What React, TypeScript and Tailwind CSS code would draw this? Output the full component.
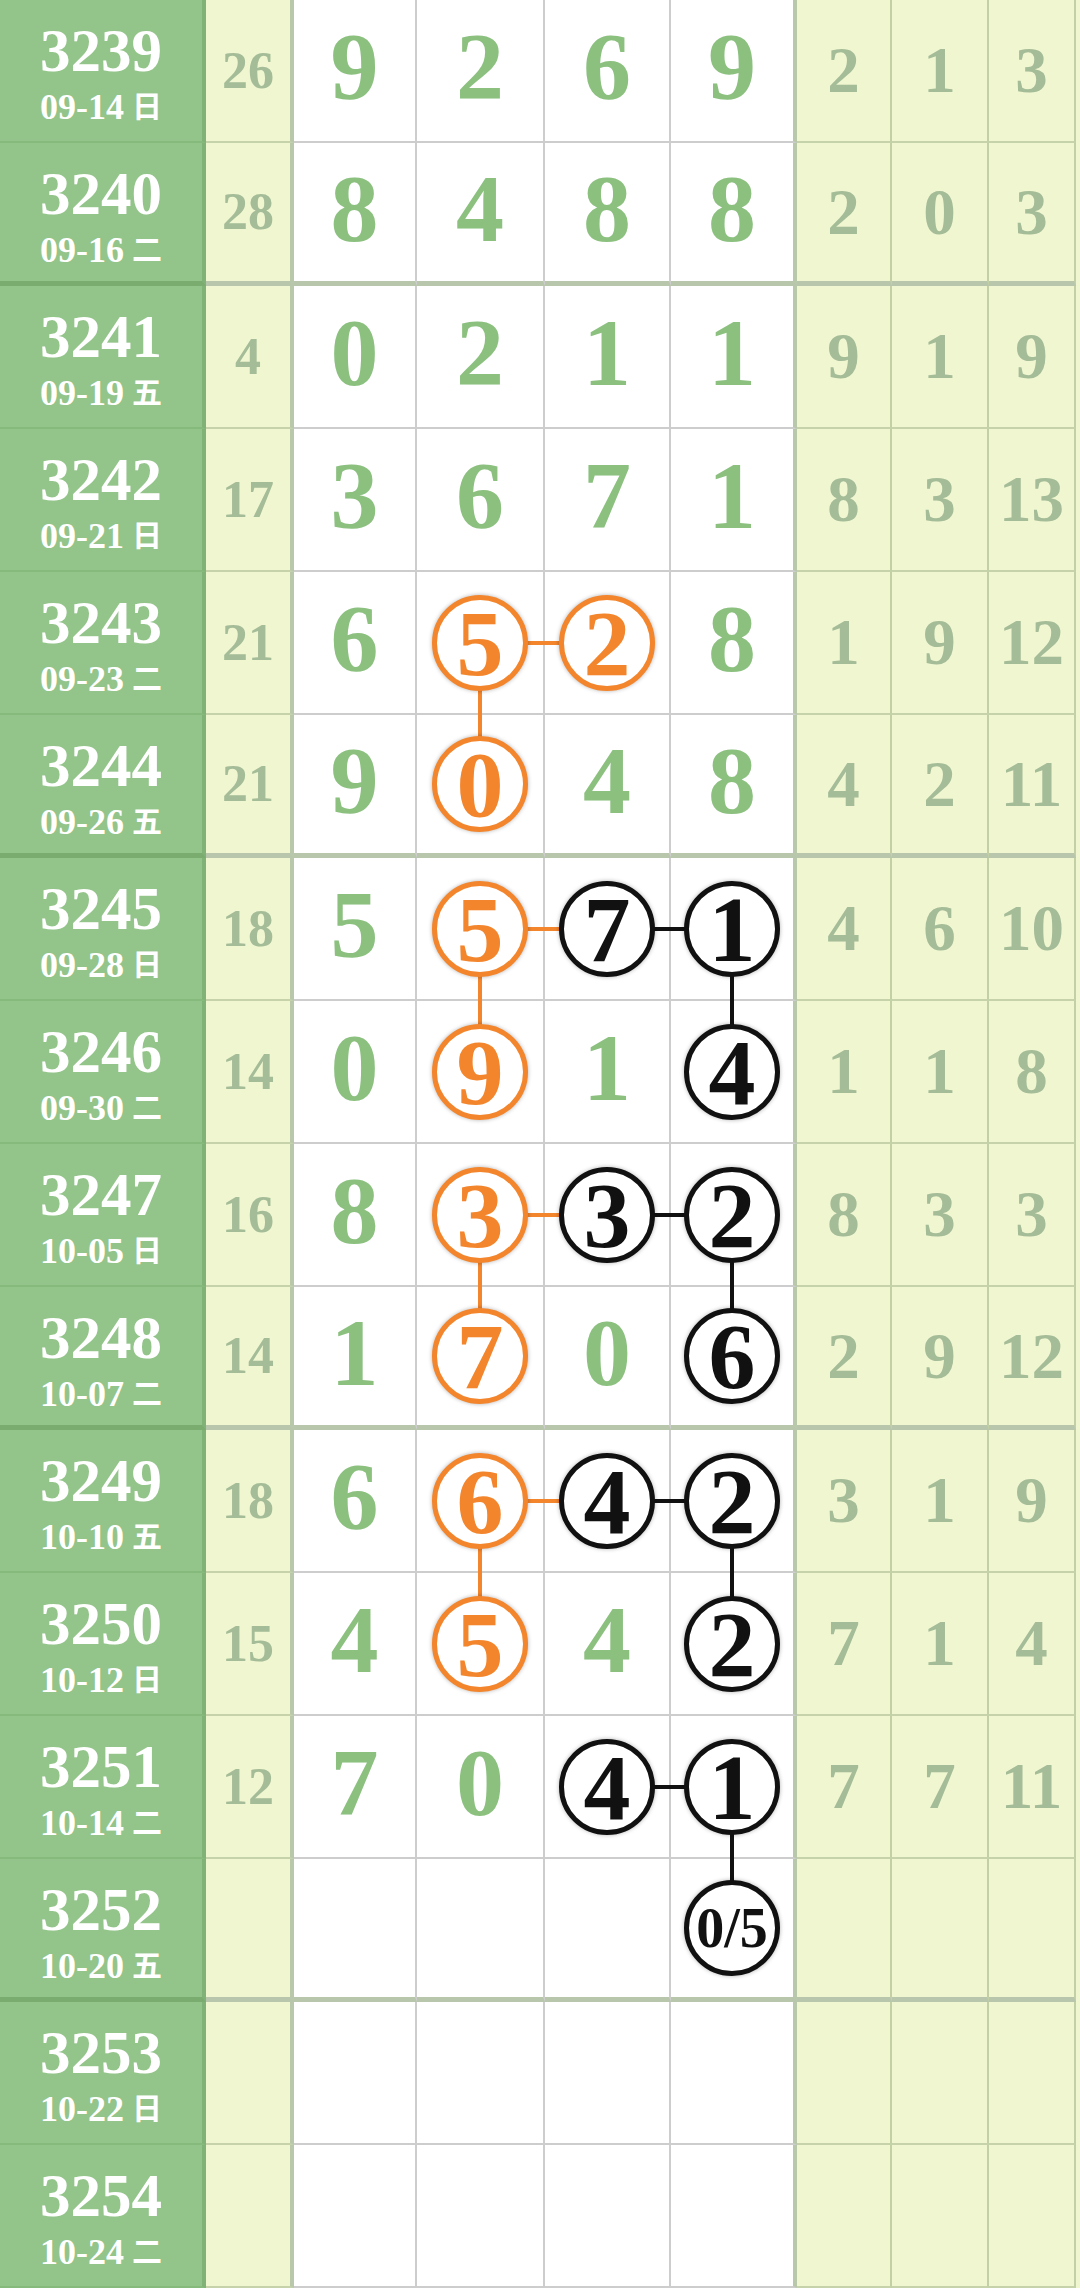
type Row = {
  n: string;
  d: string;
  w: string;
  s?: string;
  v?: string[];
  r?: string[];
  m?: string;
  lr?: number[];
  ld?: number[];
};

const rows: Row[] = [
  { n: "3239", d: "09-14", w: "日", s: "26", v: ["9", "2", "6", "9"], r: ["2", "1", "3"] },
  { n: "3240", d: "09-16", w: "二", s: "28", v: ["8", "4", "8", "8"], r: ["2", "0", "3"] },
  { n: "3241", d: "09-19", w: "五", s: "4", v: ["0", "2", "1", "1"], r: ["9", "1", "9"] },
  { n: "3242", d: "09-21", w: "日", s: "17", v: ["3", "6", "7", "1"], r: ["8", "3", "13"] },
  { n: "3243", d: "09-23", w: "二", s: "21", v: ["6", "5", "2", "8"], r: ["1", "9", "12"], m: ".oo.", lr: [1], ld: [1] },
  { n: "3244", d: "09-26", w: "五", s: "21", v: ["9", "0", "4", "8"], r: ["4", "2", "11"], m: ".o.." },
  { n: "3245", d: "09-28", w: "日", s: "18", v: ["5", "5", "7", "1"], r: ["4", "6", "10"], m: ".obb", lr: [1, 2], ld: [1, 3] },
  { n: "3246", d: "09-30", w: "二", s: "14", v: ["0", "9", "1", "4"], r: ["1", "1", "8"], m: ".o.b" },
  { n: "3247", d: "10-05", w: "日", s: "16", v: ["8", "3", "3", "2"], r: ["8", "3", "3"], m: ".obb", lr: [1, 2], ld: [1, 3] },
  { n: "3248", d: "10-07", w: "二", s: "14", v: ["1", "7", "0", "6"], r: ["2", "9", "12"], m: ".o.b" },
  { n: "3249", d: "10-10", w: "五", s: "18", v: ["6", "6", "4", "2"], r: ["3", "1", "9"], m: ".obb", lr: [1, 2], ld: [1, 3] },
  { n: "3250", d: "10-12", w: "日", s: "15", v: ["4", "5", "4", "2"], r: ["7", "1", "4"], m: ".o.b" },
  { n: "3251", d: "10-14", w: "二", s: "12", v: ["7", "0", "4", "1"], r: ["7", "7", "11"], m: "..bb", lr: [2], ld: [3] },
  { n: "3252", d: "10-20", w: "五", v: ["", "", "", "0/5"], m: "...b" },
  { n: "3253", d: "10-22", w: "日" },
  { n: "3254", d: "10-24", w: "二" },
];

const mainW = ["w-[123px]", "w-[128px]", "w-[126px]", "w-[126px]"];
const sideW = ["w-[95px]", "w-[97px]", "w-[87px]"];

const lineColor = (mark?: string) => (mark === "o" ? "bg-[#f3852c]" : "bg-[#111111]");

const Ball = ({ text, mark }: { text: string; mark: string }) => {
  const orange = mark === "o";
  return (
    <div
      className={`relative z-10 w-[96px] h-[96px] rounded-full bg-white border-[5px] flex items-center justify-center leading-none shadow-[0_0_4px_rgba(0,0,0,0.3)] ${
        orange ? "border-[#f3852c] text-[#f3852c]" : "border-[#111111] text-[#111111]"
      } ${text.length > 1 ? "text-[56px]" : "text-[94px]"}`}
    >
      {text}
    </div>
  );
};

const App = () => {
  return (
    <div className="w-[1080px] font-['Liberation_Serif','Noto_Sans_CJK_SC',serif] font-bold">
      {rows.map((row, ri) => {
        const thick = ri % 4 === 1;
        const prev = ri > 0 ? rows[ri - 1] : undefined;
        return (
          <div key={row.n} className="flex h-[143px] bg-[#f0f7d0]">
            <div
              className={`w-[206px] shrink-0 h-full bg-[#93c48a] border-r-[4px] border-r-[#80b176] flex flex-col items-center pt-[20px] text-white ${
                thick ? "border-b-[5px] border-b-[#7aac70]" : "border-b-2 border-b-[#86b97c]"
              }`}
            >
              <div className="text-[61px] leading-none">{row.n}</div>
              <div className="text-[36px] leading-none mt-[8px] flex items-center gap-[8px]">
                <span>{row.d}</span>
                <span className="text-[30px]">{row.w}</span>
              </div>
            </div>
            <div
              className={`w-[88px] shrink-0 h-full border-r-[4px] border-r-[#b9c8ab] flex items-center justify-center text-[52px] leading-none text-[#a5bc98] ${
                thick ? "border-b-[5px] border-b-[#b8c6ab]" : "border-b-2 border-b-[#c5d2aa]"
              }`}
            >
              {row.s}
            </div>
            {mainW.map((w, ci) => {
              const mark = row.m?.[ci];
              const isBall = mark === "o" || mark === "b";
              const right = row.lr?.includes(ci);
              const left = row.lr?.includes(ci - 1);
              const down = row.ld?.includes(ci);
              const up = prev?.ld?.includes(ci);
              const text = row.v?.[ci] ?? "";
              return (
                <div
                  key={ci}
                  className={`${w} shrink-0 h-full bg-white relative flex items-center justify-center ${
                    ci === 3 ? "border-r-[4px] border-r-[#b9c8ab]" : "border-r-2 border-r-[#cdcdcd]"
                  } ${thick ? "border-b-[5px] border-b-[#b8c6ab]" : "border-b-2 border-b-[#cdcdcd]"}`}
                >
                  {right && (
                    <span className={`absolute left-1/2 right-[-2px] top-1/2 -translate-y-1/2 h-[4px] ${lineColor(mark)}`} />
                  )}
                  {left && (
                    <span className={`absolute left-0 right-1/2 top-1/2 -translate-y-1/2 h-[4px] ${lineColor(row.m?.[ci - 1])}`} />
                  )}
                  {down && (
                    <span
                      className={`absolute top-1/2 left-1/2 -translate-x-1/2 w-[4px] ${
                        thick ? "bottom-[-5px]" : "bottom-[-2px]"
                      } ${lineColor(mark)}`}
                    />
                  )}
                  {up && (
                    <span className={`absolute top-0 bottom-1/2 left-1/2 -translate-x-1/2 w-[4px] ${lineColor(prev?.m?.[ci])}`} />
                  )}
                  {isBall ? (
                    <Ball text={text} mark={mark as string} />
                  ) : (
                    <span className="text-[96px] leading-none text-[#8bc07f] pb-[7px]">{text}</span>
                  )}
                </div>
              );
            })}
            {sideW.map((w, ci) => (
              <div
                key={ci}
                className={`${w} shrink-0 h-full border-r-2 border-r-[#c3d0a6] flex items-center justify-center text-[65px] leading-none text-[#a5bc98] ${
                  thick ? "border-b-[5px] border-b-[#b8c6ab]" : "border-b-2 border-b-[#c5d2aa]"
                }`}
              >
                {row.r?.[ci]}
              </div>
            ))}
          </div>
        );
      })}
    </div>
  );
};

export default App;
